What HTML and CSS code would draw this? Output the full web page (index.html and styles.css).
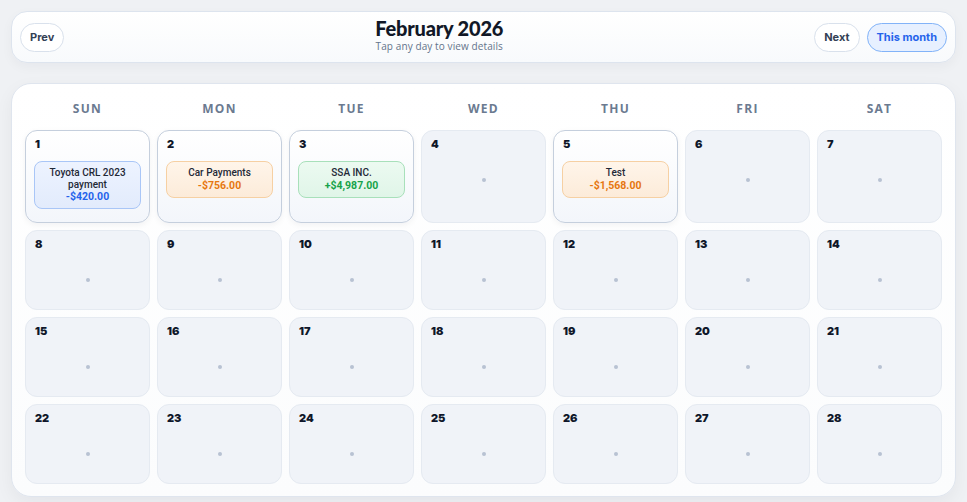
FILE: index.html
```html
<!DOCTYPE html>
<html>
<head>
<meta charset="utf-8">
<link rel="stylesheet" href="styles.css">
</head>
<body>
<div class="page">
  <header class="topbar">
    <button class="btn">Prev</button>
    <div class="title-wrap">
      <div class="title">February 2026</div>
      <div class="subtitle">Tap any day to view details</div>
    </div>
    <div class="btn-group">
      <button class="btn">Next</button>
      <button class="btn btn-primary">This month</button>
    </div>
  </header>

  <section class="calendar">
    <div class="weekdays">
      <div>SUN</div><div>MON</div><div>TUE</div><div>WED</div><div>THU</div><div>FRI</div><div>SAT</div>
    </div>
    <div class="grid">
      <div class="cell has-events">
        <div class="num">1</div>
        <div class="chip chip-blue"><div class="chip-name">Toyota CRL 2023 payment</div><div class="chip-amt">-$420.00</div></div>
      </div>
      <div class="cell has-events">
        <div class="num">2</div>
        <div class="chip chip-orange"><div class="chip-name">Car Payments</div><div class="chip-amt">-$756.00</div></div>
      </div>
      <div class="cell has-events">
        <div class="num">3</div>
        <div class="chip chip-green"><div class="chip-name">SSA INC.</div><div class="chip-amt">+$4,987.00</div></div>
      </div>
      <div class="cell"><div class="num">4</div><div class="empty"><span class="dot"></span></div></div>
      <div class="cell has-events">
        <div class="num">5</div>
        <div class="chip chip-orange"><div class="chip-name">Test</div><div class="chip-amt">-$1,568.00</div></div>
      </div>
      <div class="cell"><div class="num">6</div><div class="empty"><span class="dot"></span></div></div>
      <div class="cell"><div class="num">7</div><div class="empty"><span class="dot"></span></div></div>

      <div class="cell"><div class="num">8</div><div class="empty"><span class="dot"></span></div></div>
      <div class="cell"><div class="num">9</div><div class="empty"><span class="dot"></span></div></div>
      <div class="cell"><div class="num">10</div><div class="empty"><span class="dot"></span></div></div>
      <div class="cell"><div class="num">11</div><div class="empty"><span class="dot"></span></div></div>
      <div class="cell"><div class="num">12</div><div class="empty"><span class="dot"></span></div></div>
      <div class="cell"><div class="num">13</div><div class="empty"><span class="dot"></span></div></div>
      <div class="cell"><div class="num">14</div><div class="empty"><span class="dot"></span></div></div>

      <div class="cell"><div class="num">15</div><div class="empty"><span class="dot"></span></div></div>
      <div class="cell"><div class="num">16</div><div class="empty"><span class="dot"></span></div></div>
      <div class="cell"><div class="num">17</div><div class="empty"><span class="dot"></span></div></div>
      <div class="cell"><div class="num">18</div><div class="empty"><span class="dot"></span></div></div>
      <div class="cell"><div class="num">19</div><div class="empty"><span class="dot"></span></div></div>
      <div class="cell"><div class="num">20</div><div class="empty"><span class="dot"></span></div></div>
      <div class="cell"><div class="num">21</div><div class="empty"><span class="dot"></span></div></div>

      <div class="cell"><div class="num">22</div><div class="empty"><span class="dot"></span></div></div>
      <div class="cell"><div class="num">23</div><div class="empty"><span class="dot"></span></div></div>
      <div class="cell"><div class="num">24</div><div class="empty"><span class="dot"></span></div></div>
      <div class="cell"><div class="num">25</div><div class="empty"><span class="dot"></span></div></div>
      <div class="cell"><div class="num">26</div><div class="empty"><span class="dot"></span></div></div>
      <div class="cell"><div class="num">27</div><div class="empty"><span class="dot"></span></div></div>
      <div class="cell"><div class="num">28</div><div class="empty"><span class="dot"></span></div></div>
    </div>
  </section>
</div>
</body>
</html>
```

FILE: styles.css
```css
* { box-sizing: border-box; }
html, body { margin: 0; padding: 0; }
body {
  background: #eff1f4;
  font-family: "Open Sans", "Noto Sans", "Liberation Sans", sans-serif;
  color: #0f172a;
  width: 967px;
  height: 502px;
  overflow: hidden;
}
.page {
  padding: 11px 11px 0 11px;
  display: flex;
  flex-direction: column;
  gap: 20px;
}
.topbar {
  height: 52px;
  border: 1px solid #dde4ee;
  border-radius: 16px;
  background: linear-gradient(180deg, #ffffff 0%, #f8fafc 100%);
  box-shadow: 0 4px 12px rgba(15, 23, 42, 0.04);
  display: flex;
  align-items: center;
  padding: 0 8px;
}
.btn {
  height: 29px;
  border-radius: 15px;
  border: 1px solid #d9e1ec;
  background: #ffffff;
  font-family: "Inter", "Liberation Sans", sans-serif;
  font-size: 11px;
  font-weight: 700;
  color: #334155;
  padding: 0 9px;
  cursor: pointer;
}
.btn-primary {
  background: #e7f0ff;
  border-color: #82b3f8;
  color: #2563eb;
}
.btn-group { display: flex; gap: 7px; }
.title-wrap {
  flex: 1;
  text-align: center;
  padding-bottom: 5px;
}
.title {
  font-family: "Lato", "Inter", sans-serif;
  font-size: 20px;
  font-weight: 900;
  letter-spacing: -0.2px;
  line-height: 24px;
  color: #111827;
}
.subtitle {
  font-size: 10px;
  line-height: 13px;
  color: #64748b;
  font-weight: 500;
  letter-spacing: 0.1px;
}
.calendar {
  border: 1px solid #dfe5ee;
  border-radius: 20px;
  background: linear-gradient(180deg, #ffffff 0%, #fbfcfd 100%);
  box-shadow: 0 6px 18px rgba(15, 23, 42, 0.05);
  padding: 13px 13px 12px 13px;
}
.weekdays {
  display: grid;
  grid-template-columns: repeat(7, 125px);
  column-gap: 7px;
  height: 22px;
  margin-bottom: 11px;
}
.weekdays div {
  text-align: center;
  font-family: "Open Sans", "Noto Sans", sans-serif;
  font-size: 12px;
  line-height: 24px;
  font-weight: 700;
  letter-spacing: 1.3px;
  color: #6b7a90;
}
.grid {
  display: grid;
  grid-template-columns: repeat(7, 125px);
  gap: 7px;
}
.cell {
  min-height: 80px;
  border-radius: 12px;
  border: 1px solid #e5eaf1;
  background: #f0f3f8;
  padding: 6px 8px 0 8px;
  display: flex;
  flex-direction: column;
}
.cell.has-events {
  background: linear-gradient(180deg, #ffffff 0%, #f3f6fb 100%);
  border-color: #c5cfdd;
  box-shadow: 0 2px 6px rgba(15, 23, 42, 0.05);
  padding-bottom: 13px;
}
.num {
  font-family: "Inter", "Liberation Sans", sans-serif;
  font-size: 11px;
  line-height: 14px;
  font-weight: 900;
  color: #0f172a;
  padding-left: 1px;
}
.empty {
  height: 58px;
  display: flex;
  align-items: center;
  justify-content: center;
}
.dot {
  width: 4px;
  height: 4px;
  border-radius: 50%;
  background: #b8c2d3;
}
.chip {
  margin-top: 10px;
  border-radius: 8px;
  border: 1px solid;
  padding: 5px 6px;
  text-align: center;
  font-family: "Roboto", "Liberation Sans", sans-serif;
}
.chip-name {
  font-size: 10px;
  line-height: 11.5px;
  font-weight: 500;
  color: #1f2937;
}
.chip-amt {
  font-size: 10.5px;
  line-height: 13px;
  font-weight: 700;
}
.chip-blue {
  background: linear-gradient(180deg, #edf3ff 0%, #e2ebfc 100%);
  border-color: #a9c6f7;
}
.chip-blue .chip-amt { color: #2563eb; }
.chip-orange {
  background: linear-gradient(180deg, #fff5ea 0%, #fcebd9 100%);
  border-color: #f6d0a3;
}
.chip-orange .chip-amt { color: #e67710; }
.chip-green {
  background: linear-gradient(180deg, #ecfaf1 0%, #e0f5e8 100%);
  border-color: #a8e0ba;
}
.chip-green .chip-amt { color: #16a34a; }
```
